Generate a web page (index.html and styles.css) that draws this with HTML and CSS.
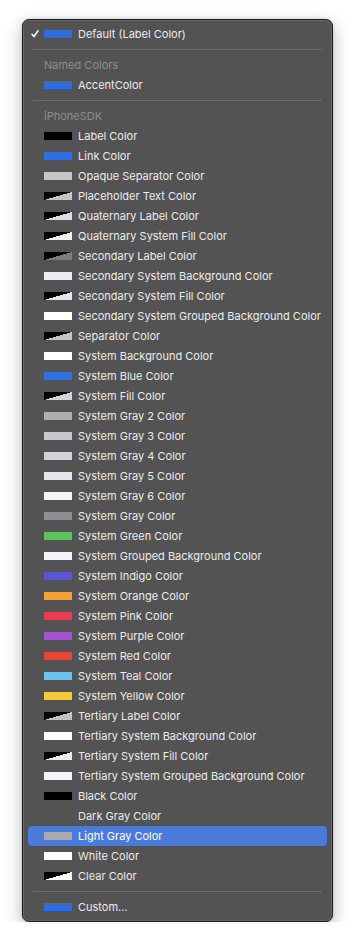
FILE: index.html
```html
<!DOCTYPE html>
<html>
<head>
<meta charset="utf-8">
<link rel="stylesheet" href="styles.css">
</head>
<body>
<div class="menu">
  <div class="item"><svg class="check" viewBox="0 0 8 8"><polyline points="1,4.3 3,6.6 7,0.8" /></svg><span class="sw" style="background:#2f6ddc"></span><span class="label">Default (Label Color)</span></div>
  <div class="sep"></div>
  <div class="header">Named Colors</div>
  <div class="item"><span class="sw" style="background:#2f6ddc"></span><span class="label">AccentColor</span></div>
  <div class="sep"></div>
  <div class="header">iPhoneSDK</div>
  <div class="item"><span class="sw" style="background:#000"></span><span class="label">Label Color</span></div>
  <div class="item"><span class="sw" style="background:#2f6fe6"></span><span class="label">Link Color</span></div>
  <div class="item"><span class="sw" style="background:#c6c6c8"></span><span class="label">Opaque Separator Color</span></div>
  <div class="item"><span class="sw tri" style="--c:#c4c4c6"></span><span class="label">Placeholder Text Color</span></div>
  <div class="item"><span class="sw tri" style="--c:#dedee0"></span><span class="label">Quaternary Label Color</span></div>
  <div class="item"><span class="sw tri" style="--c:#f2f2f4"></span><span class="label">Quaternary System Fill Color</span></div>
  <div class="item"><span class="sw tri" style="--c:#7c7c80"></span><span class="label">Secondary Label Color</span></div>
  <div class="item"><span class="sw" style="background:#eeeef2"></span><span class="label">Secondary System Background Color</span></div>
  <div class="item"><span class="sw tri" style="--c:#e6e6ea"></span><span class="label">Secondary System Fill Color</span></div>
  <div class="item"><span class="sw" style="background:#ffffff"></span><span class="label">Secondary System Grouped Background Color</span></div>
  <div class="item"><span class="sw tri" style="--c:#c4c4c6"></span><span class="label">Separator Color</span></div>
  <div class="item"><span class="sw" style="background:#ffffff"></span><span class="label">System Background Color</span></div>
  <div class="item"><span class="sw" style="background:#2f6fe6"></span><span class="label">System Blue Color</span></div>
  <div class="item"><span class="sw tri" style="--c:#d4d4d8"></span><span class="label">System Fill Color</span></div>
  <div class="item"><span class="sw" style="background:#aeaeb2"></span><span class="label">System Gray 2 Color</span></div>
  <div class="item"><span class="sw" style="background:#c7c7cc"></span><span class="label">System Gray 3 Color</span></div>
  <div class="item"><span class="sw" style="background:#d1d1d6"></span><span class="label">System Gray 4 Color</span></div>
  <div class="item"><span class="sw" style="background:#e5e5ea"></span><span class="label">System Gray 5 Color</span></div>
  <div class="item"><span class="sw" style="background:#f2f2f7"></span><span class="label">System Gray 6 Color</span></div>
  <div class="item"><span class="sw" style="background:#8e8e93"></span><span class="label">System Gray Color</span></div>
  <div class="item"><span class="sw" style="background:#5ac45a"></span><span class="label">System Green Color</span></div>
  <div class="item"><span class="sw" style="background:#f2f2f7"></span><span class="label">System Grouped Background Color</span></div>
  <div class="item"><span class="sw" style="background:#5856d6"></span><span class="label">System Indigo Color</span></div>
  <div class="item"><span class="sw" style="background:#f2a03a"></span><span class="label">System Orange Color</span></div>
  <div class="item"><span class="sw" style="background:#ec3a55"></span><span class="label">System Pink Color</span></div>
  <div class="item"><span class="sw" style="background:#a552d6"></span><span class="label">System Purple Color</span></div>
  <div class="item"><span class="sw" style="background:#ea4434"></span><span class="label">System Red Color</span></div>
  <div class="item"><span class="sw" style="background:#6cc2ee"></span><span class="label">System Teal Color</span></div>
  <div class="item"><span class="sw" style="background:#f5cb3a"></span><span class="label">System Yellow Color</span></div>
  <div class="item"><span class="sw tri" style="--c:#c2c2c4"></span><span class="label">Tertiary Label Color</span></div>
  <div class="item"><span class="sw" style="background:#ffffff"></span><span class="label">Tertiary System Background Color</span></div>
  <div class="item"><span class="sw tri" style="--c:#ececee"></span><span class="label">Tertiary System Fill Color</span></div>
  <div class="item"><span class="sw" style="background:#f2f2f7"></span><span class="label">Tertiary System Grouped Background Color</span></div>
  <div class="item"><span class="sw" style="background:#000"></span><span class="label">Black Color</span></div>
  <div class="item"><span class="sw dark" style="background:#555555"></span><span class="label">Dark Gray Color</span></div>
  <div class="item selected"><span class="sw" style="background:#aaaaaa"></span><span class="label">Light Gray Color</span></div>
  <div class="item"><span class="sw" style="background:#ffffff"></span><span class="label">White Color</span></div>
  <div class="item"><span class="sw tri" style="--c:#ffffff"></span><span class="label">Clear Color</span></div>
  <div class="sep"></div>
  <div class="item"><span class="sw" style="background:#2f6ddc"></span><span class="label">Custom…</span></div>
</div>
</body>
</html>
```
FILE: styles.css
```css
html, body {
  margin: 0;
  padding: 0;
  background: #ffffff;
}

body {
  font-family: Inter, "Liberation Sans", sans-serif;
  -webkit-font-smoothing: antialiased;
}

.menu {
  box-sizing: border-box;
  width: 311px;
  margin: 19px 0 0 22px;
  padding: 4px 0;
  background: #535353;
  border: 1px solid #1e1e1e;
  border-radius: 7px;
  box-shadow: inset 0 0 0 1px rgba(255, 255, 255, 0.12), 0 6px 18px rgba(0, 0, 0, 0.28), 0 0 3px rgba(0, 0, 0, 0.15);
  display: flex;
  flex-direction: column;
}

.item {
  position: relative;
  display: flex;
  align-items: center;
  height: 20px;
  margin: 0 5px;
  padding-left: 16px;
  border-radius: 4px;
  color: #ececec;
  font-size: 11px;
  letter-spacing: 0;
  white-space: nowrap;
}

.item.selected {
  background: #4b7bd9;
  color: #ffffff;
}

.check {
  position: absolute;
  left: 3px;
  top: 6px;
  width: 8px;
  height: 8px;
  fill: none;
  stroke: #ffffff;
  stroke-width: 1.6;
  stroke-linecap: round;
  stroke-linejoin: round;
}

.sw {
  flex: none;
  width: 28px;
  height: 8px;
  margin-right: 6px;
}

.sw.tri {
  background: linear-gradient(to bottom right, #000000 50%, var(--c) 50%);
}

.sw.dark {
  box-shadow: inset 0 0 0 1px #4e4e4e;
}

.header {
  height: 20px;
  line-height: 21px;
  padding-left: 21px;
  font-size: 11px;
  color: #8d8d8d;
  white-space: nowrap;
}

.sep {
  height: 1px;
  margin: 5px 10px;
  background: #6c6c6c;
}
```
